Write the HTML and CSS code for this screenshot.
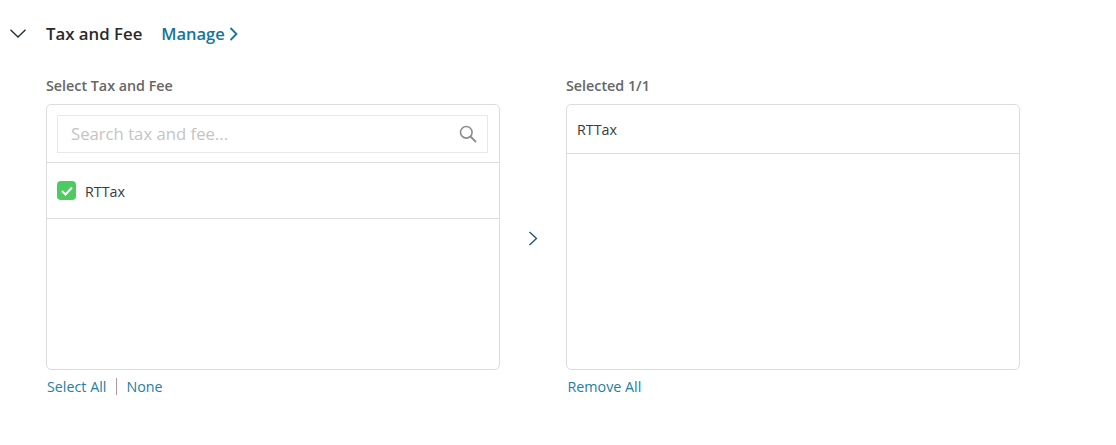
FILE: index.html
```html
<!DOCTYPE html>
<html lang="en">
<head>
<meta charset="utf-8">
<title>Tax and Fee</title>
<link rel="stylesheet" href="styles.css">
</head>
<body>
<section class="section">
  <header class="head">
    <svg class="caret" width="16" height="9" viewBox="0 0 16 9"><path d="M.5.7 8 8 15.500.7" fill="none" stroke="#1d2b3a" stroke-width="1.300"/></svg>
    <h2 class="title">Tax and Fee</h2>
    <a class="manage">Manage</a>
    <svg class="manage-icon" width="9" height="14" viewBox="0 0 9 14"><path d="M1.500 1 7.500 7l-6 6" fill="none" stroke="#13759c" stroke-width="1.800"/></svg>
  </header>
  <div class="columns">
    <div class="col">
      <div class="label">Select Tax and Fee</div>
      <div class="panel">
        <div class="search-row">
          <div class="search">
            <span class="placeholder">Search tax and fee...</span>
            <svg width="18" height="18" viewBox="0 0 18 18"><circle cx="7.300" cy="7.300" r="5.800" fill="none" stroke="#8c8c8c" stroke-width="1.600"/><path d="m11.500 11.500 5.500 5.500" stroke="#8c8c8c" stroke-width="1.800"/></svg>
          </div>
        </div>
        <div class="check-row">
          <span class="check"><svg width="12" height="10" viewBox="0 0 12 10"><path d="m1 5 3.500 3.500L11 1.500" fill="none" stroke="#fff" stroke-width="2"/></svg></span>
          <span class="item item-checked">RTTax</span>
        </div>
      </div>
      <div class="links"><a>Select All</a><span class="sep"></span><a>None</a></div>
    </div>
    <div class="mid">
      <svg width="10" height="15" viewBox="0 0 10 15"><path d="M1.500 1 8.500 7.500l-7 6.500" fill="none" stroke="#1f4f7a" stroke-width="1.300"/></svg>
    </div>
    <div class="col">
      <div class="label">Selected 1/1</div>
      <div class="panel">
        <div class="selected-row"><span class="item">RTTax</span></div>
      </div>
      <div class="links links-right"><a>Remove All</a></div>
    </div>
  </div>
</section>
</body>
</html>
```
FILE: styles.css
```css
* { box-sizing: border-box; }
body { margin: 0; background: #fff; font-family: "Open Sans", sans-serif; }
.section { padding: 22px 0 0 10px; }
.head { display: flex; align-items: center; height: 23px; }
.caret { width: 16px; margin-right: 20px; }
.title { margin: 0 19px 0 0; font-size: 16.800px; font-weight: 600; color: #2b2b2b; line-height: 23px; }
.manage { font-size: 16.500px; font-weight: 600; color: #13759c; line-height: 23px; }
.manage-icon { margin-left: 4px; }
.columns { display: flex; margin: 19px 0 0 36px; }
.col { width: 454px; }
.label { font-size: 14.300px; font-weight: 600; color: #666; line-height: 22px; height: 22px; margin-top: 11px; margin-bottom: 7px; }
.panel { height: 266px; border: 1px solid #dcdcdc; border-radius: 5px; }
.search-row { height: 58px; padding: 10px 11px 10px 10px; border-bottom: 1px solid #dcdcdc; }
.search { display: flex; align-items: center; justify-content: space-between; height: 38px; padding: 0 10px 0 13px; border: 1px solid #e8e8e8; }
.placeholder { font-size: 16.700px; line-height: 34px; color: #c4c4c4; }
.check-row { display: flex; align-items: center; height: 56px; padding: 0 10px; border-bottom: 1px solid #dcdcdc; }
.check { display: flex; align-items: center; justify-content: center; width: 19px; height: 19px; border-radius: 4px; background: #4ccb60; margin-right: 9px; }
.item { font-size: 14.300px; color: #3a3a3a; }
.item-checked { margin-top: 2px; }
.selected-row { display: flex; align-items: center; height: 49px; padding: 0 10px; border-bottom: 1px solid #dcdcdc; }
.links { display: flex; align-items: center; height: 22px; margin-top: 5px; padding-left: 1px; font-size: 14.300px; color: #24809f; }
.links-right { padding-left: 1.500px; }
.sep { width: 1px; height: 17px; background: #b59a9a; margin: 0 9px 0 10px; }
.mid { display: flex; align-items: center; justify-content: center; width: 66px; padding-top: 15px; }
```
